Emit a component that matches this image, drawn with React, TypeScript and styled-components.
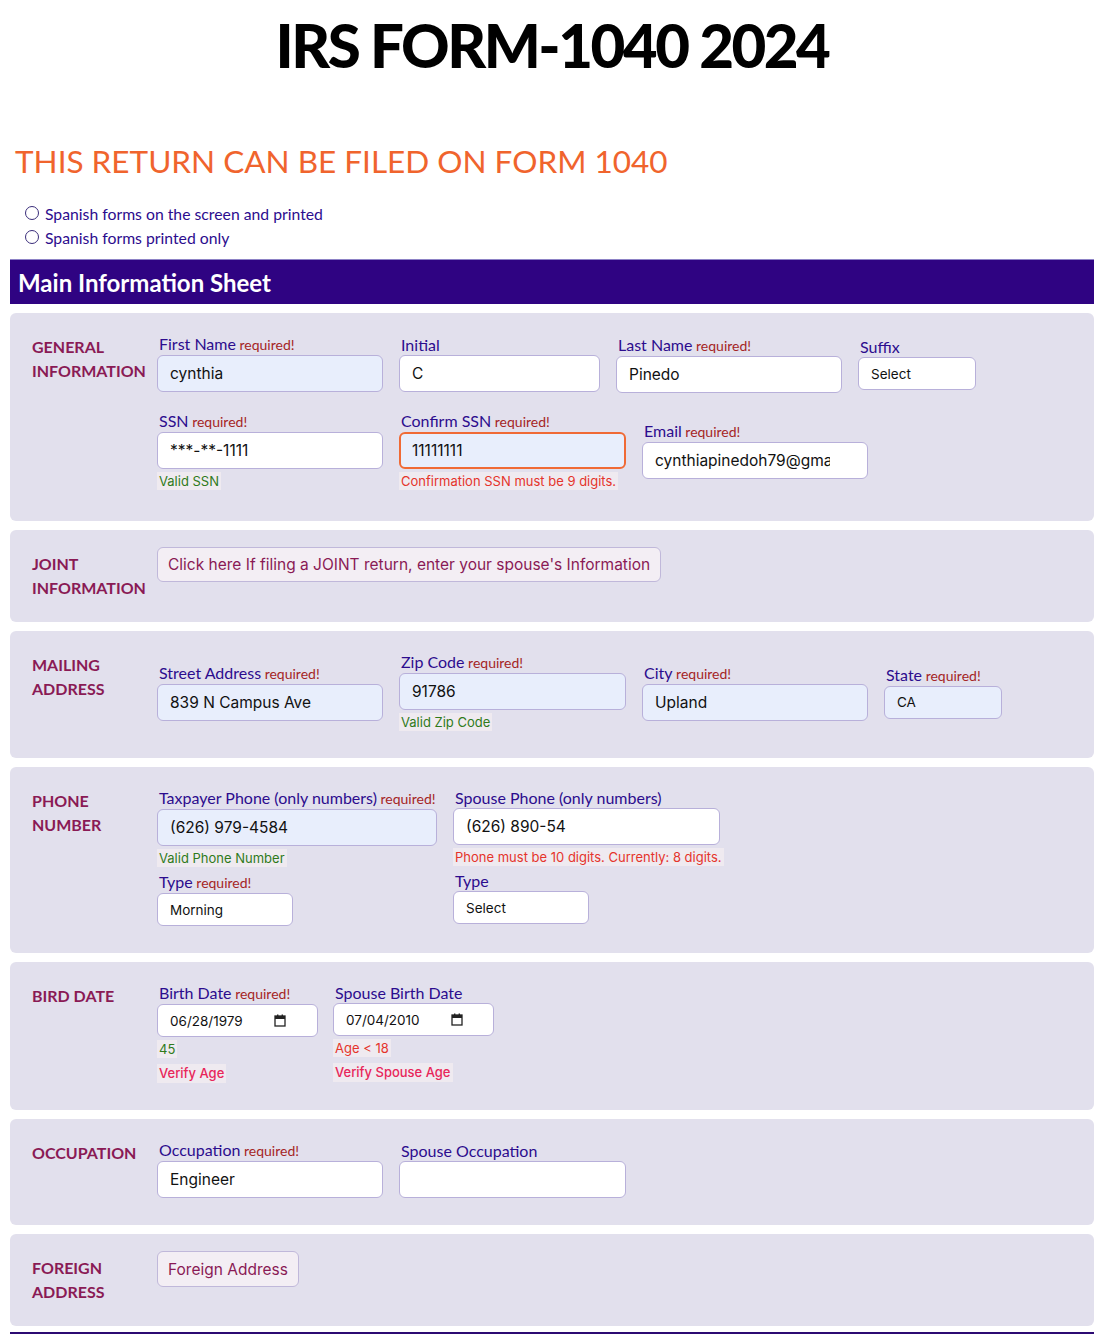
import React from 'react';
import styled, { createGlobalStyle, css } from 'styled-components';

const Global = createGlobalStyle`
  html, body { margin: 0; padding: 0; background: #ffffff; }
  body { font-family: Lato, "Noto Sans", sans-serif; }
  * { box-sizing: border-box; }
`;

const INDIGO = '#2c0c8e';
const MAROON = '#8a1a55';
const SANS = 'Inter, "Liberation Sans", Arial, sans-serif';

const Page = styled.div`
  padding: 0 8px 0 10px;
`;

const Title = styled.h1`
  margin: 9px 0 0;
  text-align: center;
  font-family: Lato, sans-serif;
  font-weight: 900;
  font-size: 60px;
  line-height: 72px;
  letter-spacing: -2.5px;
  color: #000;
`;

const Subtitle = styled.h2`
  margin: 61px 0 0 5px;
  font-family: Lato, sans-serif;
  font-weight: 400;
  font-size: 31.5px;
  line-height: 38px;
  color: #f0642d;
`;

const RadioGroup = styled.div`
  margin-top: 21px;
  padding-left: 15px;
  display: flex;
  flex-direction: column;
`;

const RadioRow = styled.label`
  display: flex;
  align-items: center;
  gap: 6px;
  height: 24px;
  font-family: Lato, sans-serif;
  font-size: 15.75px;
  color: ${INDIGO};
`;

const Radio = styled.input`
  appearance: none;
  margin: 0;
  width: 14px;
  height: 14px;
  border: 1px solid #3a2d7a;
  border-radius: 50%;
  background: #fff;
`;

const Bar = styled.div`
  margin-top: 10px;
  height: 45px;
  background: #2f0382;
  border-top: 1px solid #8d82c6;
  display: flex;
  align-items: center;
  padding-left: 8px;
  font-family: Lato, sans-serif;
  font-weight: 700;
  font-size: 24px;
  color: #ffffff;
`;

const Sections = styled.div`
  margin-top: 9px;
  display: flex;
  flex-direction: column;
  gap: 9px;
`;

const Section = styled.section`
  background: #e2e0ed;
  border-radius: 6px;
  padding: 17px 22px 22px;
  display: flex;
  align-items: flex-start;
`;

const SectionTitle = styled.div`
  width: 125px;
  flex-shrink: 0;
  margin-top: 5px;
  font-family: Lato, sans-serif;
  font-weight: 700;
  font-size: 16px;
  line-height: 24px;
  color: ${MAROON};
`;

const Fields = styled.div<{ $gap?: number; $padBottom?: number }>`
  flex: 1;
  display: flex;
  flex-direction: column;
  gap: ${(p) => p.$gap ?? 0}px;
  padding-bottom: ${(p) => p.$padBottom ?? 0}px;
`;

const Row = styled.div<{ $align?: string; $gap?: number }>`
  display: flex;
  gap: ${(p) => p.$gap ?? 16}px;
  align-items: ${(p) => p.$align ?? 'center'};
`;

const Field = styled.div<{ $w: number }>`
  width: ${(p) => p.$w}px;
  padding: 4px 0 5px;
  display: flex;
  flex-direction: column;
  align-items: flex-start;
`;

const Column = styled.div<{ $w: number }>`
  width: ${(p) => p.$w}px;
  padding: 4px 0 5px;
  display: flex;
  flex-direction: column;
  gap: 5px;

  & > ${Field} {
    padding: 0;
  }
`;

const Label = styled.label`
  padding-left: 2px;
  margin-bottom: 1px;
  font-family: Lato, sans-serif;
  font-size: 16px;
  line-height: 19px;
  color: ${INDIGO};
  white-space: nowrap;
`;

const Req = styled.span`
  font-size: 14px;
  color: #a52525;
`;

const TextInput = styled.input<{ $filled?: boolean; $focus?: boolean; $padRight?: number }>`
  width: 100%;
  height: 37px;
  margin: 0;
  padding: 0 ${(p) => p.$padRight ?? 12}px 0 12px;
  border: 1px solid #b8b0da;
  border-radius: 6px;
  background: ${(p) => (p.$filled ? '#e8eefc' : '#ffffff')};
  font-family: ${SANS};
  font-size: 15.5px;
  color: #111;
  outline: none;
  ${(p) =>
    p.$focus &&
    css`
      border: 2px solid #f06a35;
      padding: 0 11px;
    `}
`;

const Select = styled.select<{ $w: number; $filled?: boolean }>`
  appearance: none;
  width: ${(p) => p.$w}px;
  height: 33px;
  margin: 0;
  padding: 0 12px;
  border: 1px solid #b8b0da;
  border-radius: 6px;
  background: ${(p) => (p.$filled ? '#e8eefc' : '#ffffff')};
  font-family: ${SANS};
  font-size: 13.5px;
  color: #111;
`;

const DateBox = styled.div`
  width: 100%;
  height: 33px;
  padding: 0 12px;
  border: 1px solid #b8b0da;
  border-radius: 6px;
  background: #ffffff;
  display: flex;
  align-items: center;
  gap: 31px;
  font-family: ${SANS};
  font-size: 13.5px;
  color: #111;
`;

type Tone = 'ok' | 'err' | 'warn' | 'none';
const toneColor: Record<Tone, string> = {
  ok: '#2f7a1b',
  err: '#e5342b',
  warn: '#e8265a',
  none: 'transparent',
};

const Note = styled.span<{ $tone: Tone; $strong?: boolean }>`
  margin-top: ${(p) => (p.$tone === 'none' ? 1 : p.$strong ? 6 : 3)}px;
  padding: 0 2px;
  line-height: ${(p) => (p.$tone === 'none' ? 0 : p.$strong ? 19 : 18)}px;
  background: ${(p) => (p.$tone === 'none' ? 'transparent' : '#efeaf0')};
  font-family: ${SANS};
  font-size: 13px;
  font-weight: ${(p) => (p.$strong ? 500 : 400)};
  color: ${(p) => toneColor[p.$tone]};
  white-space: nowrap;
`;

const PillButton = styled.button<{ $h: number }>`
  align-self: flex-start;
  height: ${(p) => p.$h}px;
  padding: 0 10px;
  border: 1px solid #c0b8da;
  border-radius: 6px;
  background: #f3eef4;
  font-family: ${SANS};
  font-size: 15.5px;
  color: ${MAROON};
`;

const Rule = styled.hr`
  margin: 6px 0 0;
  border: none;
  border-top: 2px solid #2c0a73;
`;

const Calendar = () => (
  <svg width="12" height="13" viewBox="0 0 12 13" aria-hidden>
    <rect x="1" y="2" width="10" height="10" fill="none" stroke="#222" strokeWidth="1.3" />
    <rect x="1" y="2" width="10" height="3" fill="#222" />
    <rect x="3" y="0.5" width="1.4" height="2" fill="#222" />
    <rect x="7.6" y="0.5" width="1.4" height="2" fill="#222" />
  </svg>
);

const FieldLabel = ({ text, req }: { text: string; req?: boolean }) => (
  <Label>
    {text}
    {req && <Req> required!</Req>}
  </Label>
);

export default function App() {
  return (
    <Page>
      <Global />
      <Title>IRS FORM-1040 2024</Title>
      <Subtitle>THIS RETURN CAN BE FILED ON FORM 1040</Subtitle>
      <RadioGroup>
        <RadioRow>
          <Radio type="radio" name="spanish" />
          Spanish forms on the screen and printed
        </RadioRow>
        <RadioRow>
          <Radio type="radio" name="spanish" />
          Spanish forms printed only
        </RadioRow>
      </RadioGroup>
      <Bar>Main Information Sheet</Bar>

      <Sections>
        <Section>
          <SectionTitle>
            GENERAL
            <br />
            INFORMATION
          </SectionTitle>
          <Fields $gap={9} $padBottom={4}>
            <Row>
              <Field $w={226}>
                <FieldLabel text="First Name" req />
                <TextInput $filled defaultValue="cynthia" />
                <Note $tone="none" />
              </Field>
              <Field $w={201}>
                <FieldLabel text="Initial" />
                <TextInput defaultValue="C" />
              </Field>
              <Field $w={226}>
                <FieldLabel text="Last Name" req />
                <TextInput defaultValue="Pinedo" />
              </Field>
              <Field $w={118}>
                <FieldLabel text="Suffix" />
                <Select $w={118} defaultValue="">
                  <option value="">Select</option>
                </Select>
              </Field>
            </Row>
            <Row>
              <Field $w={226}>
                <FieldLabel text="SSN" req />
                <TextInput defaultValue="***-**-1111" />
                <Note $tone="ok">Valid SSN</Note>
              </Field>
              <Field $w={227}>
                <FieldLabel text="Confirm SSN" req />
                <TextInput $filled $focus defaultValue="11111111" />
                <Note $tone="err">Confirmation SSN must be 9 digits.</Note>
              </Field>
              <Field $w={226}>
                <FieldLabel text="Email" req />
                <TextInput $padRight={37} defaultValue="cynthiapinedoh79@gmail.com" />
                <Note $tone="none" />
              </Field>
            </Row>
          </Fields>
        </Section>

        <Section>
          <SectionTitle>
            JOINT
            <br />
            INFORMATION
          </SectionTitle>
          <Fields>
            <PillButton $h={35}>Click here If filing a JOINT return, enter your spouse's Information</PillButton>
          </Fields>
        </Section>

        <Section>
          <SectionTitle>
            MAILING
            <br />
            ADDRESS
          </SectionTitle>
          <Fields>
            <Row>
              <Field $w={226}>
                <FieldLabel text="Street Address" req />
                <TextInput $filled defaultValue="839 N Campus Ave" />
              </Field>
              <Field $w={227}>
                <FieldLabel text="Zip Code" req />
                <TextInput $filled defaultValue="91786" />
                <Note $tone="ok">Valid Zip Code</Note>
              </Field>
              <Field $w={226}>
                <FieldLabel text="City" req />
                <TextInput $filled defaultValue="Upland" />
              </Field>
              <Field $w={118}>
                <FieldLabel text="State" req />
                <Select $w={118} $filled defaultValue="CA">
                  <option value="CA">CA</option>
                </Select>
              </Field>
            </Row>
          </Fields>
        </Section>

        <Section>
          <SectionTitle>
            PHONE
            <br />
            NUMBER
          </SectionTitle>
          <Fields>
            <Row $align="flex-start">
              <Column $w={280}>
                <Field $w={280}>
                  <FieldLabel text="Taxpayer Phone (only numbers)" req />
                  <TextInput $filled defaultValue="(626) 979-4584" />
                  <Note $tone="ok">Valid Phone Number</Note>
                </Field>
                <Field $w={136}>
                  <FieldLabel text="Type" req />
                  <Select $w={136} defaultValue="m">
                    <option value="m">Morning</option>
                  </Select>
                </Field>
              </Column>
              <Column $w={267}>
                <Field $w={267}>
                  <FieldLabel text="Spouse Phone (only numbers)" />
                  <TextInput defaultValue="(626) 890-54" />
                  <Note $tone="err">Phone must be 10 digits. Currently: 8 digits.</Note>
                </Field>
                <Field $w={136}>
                  <FieldLabel text="Type" />
                  <Select $w={136} defaultValue="">
                    <option value="">Select</option>
                  </Select>
                </Field>
              </Column>
            </Row>
          </Fields>
        </Section>

        <Section>
          <SectionTitle>BIRD DATE</SectionTitle>
          <Fields>
            <Row $align="flex-start" $gap={15}>
              <Field $w={161}>
                <FieldLabel text="Birth Date" req />
                <DateBox>
                  <span>06/28/1979</span>
                  <Calendar />
                </DateBox>
                <Note $tone="ok">45</Note>
                <Note $tone="warn" $strong>
                  Verify Age
                </Note>
              </Field>
              <Field $w={161}>
                <FieldLabel text="Spouse Birth Date" />
                <DateBox>
                  <span>07/04/2010</span>
                  <Calendar />
                </DateBox>
                <Note $tone="err">Age &lt; 18</Note>
                <Note $tone="warn" $strong>
                  Verify Spouse Age
                </Note>
              </Field>
            </Row>
          </Fields>
        </Section>

        <Section>
          <SectionTitle>OCCUPATION</SectionTitle>
          <Fields>
            <Row>
              <Field $w={226}>
                <FieldLabel text="Occupation" req />
                <TextInput defaultValue="Engineer" />
              </Field>
              <Field $w={227}>
                <FieldLabel text="Spouse Occupation" />
                <TextInput defaultValue="" />
              </Field>
            </Row>
          </Fields>
        </Section>

        <Section>
          <SectionTitle>
            FOREIGN
            <br />
            ADDRESS
          </SectionTitle>
          <Fields>
            <PillButton $h={36}>Foreign Address</PillButton>
          </Fields>
        </Section>
      </Sections>
      <Rule />
    </Page>
  );
}
